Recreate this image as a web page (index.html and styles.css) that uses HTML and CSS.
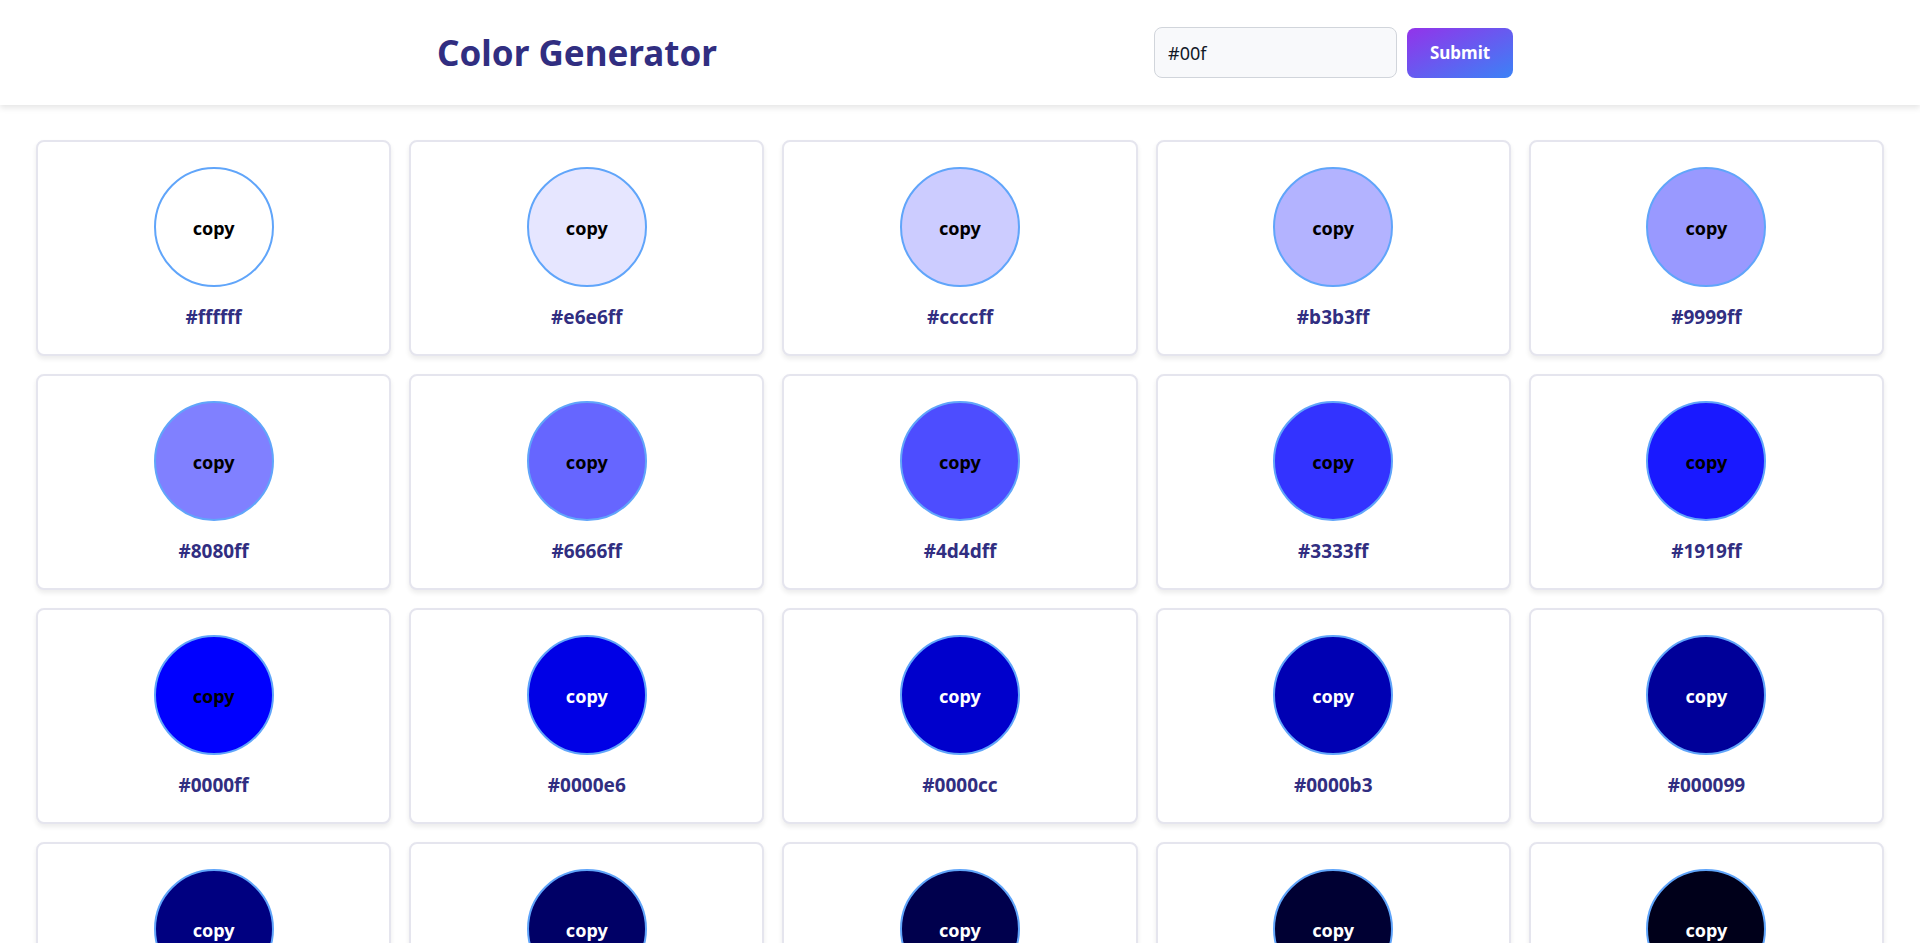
FILE: index.html
```html
<!DOCTYPE html>
<html lang="en">
<head>
<meta charset="utf-8">
<title>Color Generator</title>
<link rel="stylesheet" href="styles.css">
</head>
<body>
<header class="header">
  <h1 class="title">Color Generator</h1>
  <form class="form">
    <input class="input" type="text" value="#00f">
    <button class="btn" type="button">Submit</button>
  </form>
</header>
<main class="grid">
  <div class="card"><div class="swatch" style="background:#ffffff"><span class="copy">copy</span></div><p class="hex">#ffffff</p></div>
  <div class="card"><div class="swatch" style="background:#e6e6ff"><span class="copy">copy</span></div><p class="hex">#e6e6ff</p></div>
  <div class="card"><div class="swatch" style="background:#ccccff"><span class="copy">copy</span></div><p class="hex">#ccccff</p></div>
  <div class="card"><div class="swatch" style="background:#b3b3ff"><span class="copy">copy</span></div><p class="hex">#b3b3ff</p></div>
  <div class="card"><div class="swatch" style="background:#9999ff"><span class="copy">copy</span></div><p class="hex">#9999ff</p></div>
  <div class="card"><div class="swatch" style="background:#8080ff"><span class="copy">copy</span></div><p class="hex">#8080ff</p></div>
  <div class="card"><div class="swatch" style="background:#6666ff"><span class="copy">copy</span></div><p class="hex">#6666ff</p></div>
  <div class="card"><div class="swatch" style="background:#4d4dff"><span class="copy">copy</span></div><p class="hex">#4d4dff</p></div>
  <div class="card"><div class="swatch" style="background:#3333ff"><span class="copy">copy</span></div><p class="hex">#3333ff</p></div>
  <div class="card"><div class="swatch" style="background:#1919ff"><span class="copy">copy</span></div><p class="hex">#1919ff</p></div>
  <div class="card"><div class="swatch" style="background:#0000ff"><span class="copy">copy</span></div><p class="hex">#0000ff</p></div>
  <div class="card"><div class="swatch dark" style="background:#0000e6"><span class="copy">copy</span></div><p class="hex">#0000e6</p></div>
  <div class="card"><div class="swatch dark" style="background:#0000cc"><span class="copy">copy</span></div><p class="hex">#0000cc</p></div>
  <div class="card"><div class="swatch dark" style="background:#0000b3"><span class="copy">copy</span></div><p class="hex">#0000b3</p></div>
  <div class="card"><div class="swatch dark" style="background:#000099"><span class="copy">copy</span></div><p class="hex">#000099</p></div>
  <div class="card"><div class="swatch dark" style="background:#000080"><span class="copy">copy</span></div><p class="hex">#000080</p></div>
  <div class="card"><div class="swatch dark" style="background:#000066"><span class="copy">copy</span></div><p class="hex">#000066</p></div>
  <div class="card"><div class="swatch dark" style="background:#00004d"><span class="copy">copy</span></div><p class="hex">#00004d</p></div>
  <div class="card"><div class="swatch dark" style="background:#000033"><span class="copy">copy</span></div><p class="hex">#000033</p></div>
  <div class="card"><div class="swatch dark" style="background:#00001a"><span class="copy">copy</span></div><p class="hex">#00001a</p></div>
  <div class="card"><div class="swatch dark" style="background:#000000"><span class="copy">copy</span></div><p class="hex">#000000</p></div>
</main>
</body>
</html>
```

FILE: styles.css
```css
* { box-sizing: border-box; }

body {
  margin: 0;
  background: #ffffff;
  font-family: "Noto Sans", "Open Sans", sans-serif;
}

.header {
  height: 105px;
  display: flex;
  align-items: center;
  padding-left: 437px;
  background: #ffffff;
  box-shadow: 0 3px 6px rgba(0, 0, 0, 0.1);
  position: relative;
  z-index: 1;
}

.title {
  margin: 0;
  width: 717px;
  font-size: 35px;
  font-weight: 700;
  color: #312e81;
  letter-spacing: 0;
}

.form {
  display: flex;
  align-items: center;
  gap: 10px;
}

.input {
  width: 243px;
  height: 51px;
  padding: 0 13px;
  border: 1px solid #d1d5db;
  border-radius: 8px;
  background: #f8f9fb;
  font-family: inherit;
  font-size: 18px;
  color: #111827;
  outline: none;
}

.btn {
  width: 106px;
  height: 50px;
  border: none;
  border-radius: 8px;
  background: linear-gradient(to bottom right, #9333ea, #3b82f6);
  color: #ffffff;
  font-family: inherit;
  font-size: 17px;
  font-weight: 700;
}

.grid {
  display: grid;
  grid-template-columns: repeat(5, 1fr);
  gap: 18px;
  padding: 35px 36px 36px;
}

.card {
  height: 216px;
  display: flex;
  flex-direction: column;
  align-items: center;
  padding: 25px 24px 23px;
  border: 2px solid #e5e5ee;
  border-radius: 8px;
  background: #ffffff;
  box-shadow: 0 3px 5px rgba(0, 0, 0, 0.08);
}

.swatch {
  width: 120px;
  height: 120px;
  flex: none;
  border: 2px solid #60a5fa;
  border-radius: 50%;
  display: flex;
  align-items: center;
  justify-content: center;
  color: #000000;
}

.swatch.dark { color: #ffffff; }

.copy {
  font-size: 18px;
  font-weight: 700;
  padding-top: 2px;
}

.hex {
  margin: 16px 0 0;
  font-size: 19px;
  font-weight: 700;
  line-height: 28px;
  color: #312e81;
}
```
